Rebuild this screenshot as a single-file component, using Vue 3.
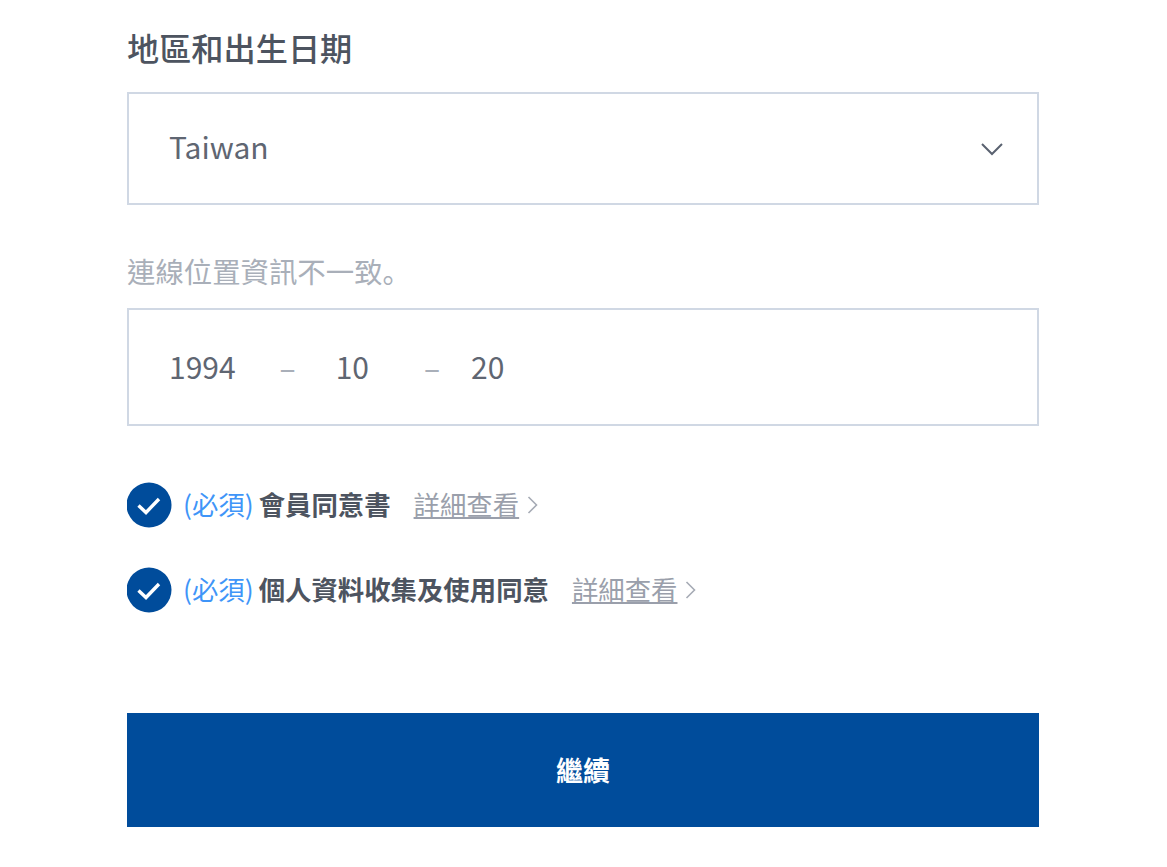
<template>
  <div class="page">
    <h2 class="title">地區和出生日期</h2>

    <div class="field select-field">
      <span>Taiwan</span>
      <svg class="arrow" width="24" height="14" viewBox="0 0 24 14">
        <path d="M2 2 L12 12 L22 2" fill="none" stroke="#5a6270" stroke-width="2" />
      </svg>
    </div>

    <p class="hint">連線位置資訊不一致<span class="hint-dot">。</span></p>

    <div class="field date-field">
      <span>1994</span>
      <span class="dash dash-first">–</span>
      <span>10</span>
      <span class="dash dash-second">–</span>
      <span>20</span>
    </div>

    <div class="agree-list">
      <div v-for="item in agreements" :key="item" class="agree-row">
        <svg class="check" width="46" height="46" viewBox="0 0 46 46">
          <circle cx="23" cy="23" r="22.5" fill="#004c9b" />
          <path d="M12.5 23.5 L20 30.5 L33 17" fill="none" stroke="#fff" stroke-width="3.4" />
        </svg>
        <span class="required">(必須)</span>
        <strong class="agree-text">{{ item }}</strong>
        <a class="more">詳細查看</a>
        <svg class="more-arrow" width="11" height="20" viewBox="0 0 11 20">
          <path d="M1.5 2 L9.5 10 L1.5 18" fill="none" stroke="#a6abb5" stroke-width="1.6" />
        </svg>
      </div>
    </div>

    <button class="next-btn">繼續</button>
  </div>
</template>

<script setup>
const agreements = ['會員同意書', '個人資料收集及使用同意']
</script>

<style>
html,
body {
  background: #fff;
}
</style>

<style scoped>
.page {
  width: 912px;
  height: 867px;
  margin-left: 127px;
  padding-top: 24px;
  box-sizing: border-box;
  overflow: hidden;
  font-family: "Noto Sans CJK TC", "Noto Sans", sans-serif;
  color: #5a6270;
}

.title {
  margin: 0;
  font-size: 32.2px;
  line-height: 46px;
  font-weight: 500;
  color: #4d5460;
}

.field {
  display: flex;
  align-items: center;
  box-sizing: border-box;
  border: 2px solid #d0d8e4;
  padding: 0 40px;
  font-size: 30px;
  color: #5f6672;
}

.select-field {
  justify-content: space-between;
  height: 113px;
  margin-top: 22px;
  padding-right: 33px;
}

.select-field span {
  margin-bottom: 5px;
}

.hint {
  margin: 43px 0 0;
  font-size: 28.4px;
  line-height: 46px;
  color: #a9afb9;
}

.hint-dot {
  font-family: "Noto Sans CJK SC", sans-serif;
}

.date-field {
  height: 118px;
  margin-top: 14px;
  padding-bottom: 2px;
  font-size: 30px;
}

.dash {
  color: #a9afb9;
}

.dash-first {
  margin: 0 40px 0 44px;
}

.dash-second {
  margin: 0 31px 0 55px;
}

.agree-list {
  display: flex;
  flex-direction: column;
  gap: 39px;
  margin-top: 56px;
}

.agree-row {
  display: flex;
  align-items: center;
  height: 46px;
  font-size: 26.4px;
}

.check {
  flex: none;
  margin-left: -1px;
}

.required {
  margin-left: 11px;
  color: #3f95f8;
  position: relative;
  top: -2px;
}

.agree-text {
  margin-left: 5px;
  font-weight: 700;
  color: #4d5460;
  position: relative;
  top: -2px;
}

.more {
  margin-left: 23px;
  color: #9a9fab;
  text-decoration: underline;
  position: relative;
  top: -2px;
}

.more-arrow {
  margin-left: 8px;
}

.next-btn {
  display: block;
  width: 100%;
  height: 114px;
  margin-top: 100px;
  padding-bottom: 2px;
  border: 0;
  border-radius: 0;
  background: #004c9b;
  color: #fff;
  font-family: inherit;
  font-size: 27px;
  font-weight: 700;
}
</style>
